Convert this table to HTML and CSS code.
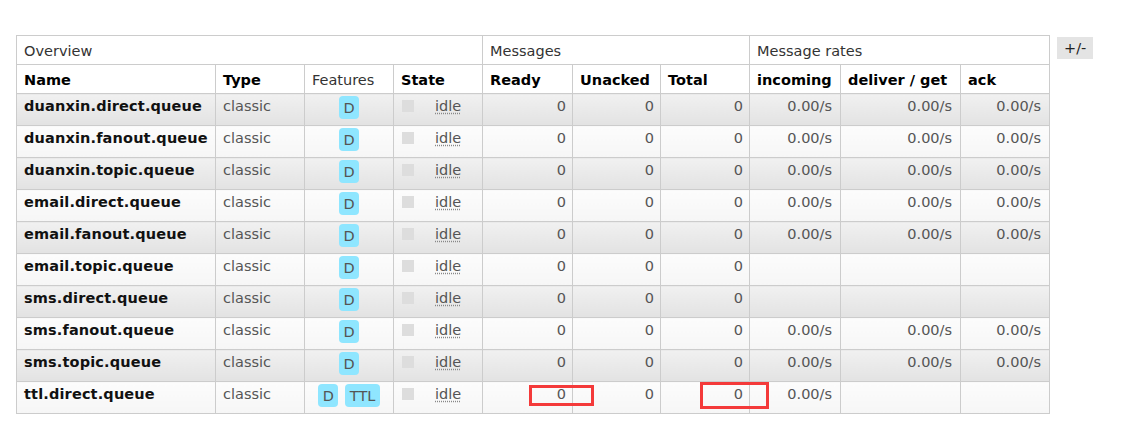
FILE: index.html
```html
<!DOCTYPE html>
<html>
<head>
<meta charset="utf-8">
<link rel="stylesheet" href="styles.css">
</head>
<body>
<div class="page">
  <table class="list">
    <colgroup>
      <col class="c-name"><col class="c-type"><col class="c-feat"><col class="c-state">
      <col class="c-ready"><col class="c-unacked"><col class="c-total">
      <col class="c-in"><col class="c-deliver"><col class="c-ack">
    </colgroup>
    <thead>
      <tr class="group">
        <th colspan="4">Overview</th>
        <th colspan="3">Messages</th>
        <th colspan="3">Message rates</th>
      </tr>
      <tr class="cols">
        <th>Name</th><th>Type</th><th class="plain">Features</th><th>State</th>
        <th>Ready</th><th>Unacked</th><th>Total</th>
        <th>incoming</th><th>deliver / get</th><th>ack</th>
      </tr>
    </thead>
    <tbody>
      <tr class="alt1">
        <td class="name">duanxin.direct.queue</td><td class="muted">classic</td>
        <td class="feat"><span class="badge">D</span></td>
        <td class="muted"><span class="dot"></span><span class="idle">idle</span></td>
        <td class="num">0</td><td class="num">0</td><td class="num">0</td>
        <td class="rate">0.00/s</td><td class="rate">0.00/s</td><td class="rate">0.00/s</td>
      </tr>
      <tr class="alt2">
        <td class="name">duanxin.fanout.queue</td><td class="muted">classic</td>
        <td class="feat"><span class="badge">D</span></td>
        <td class="muted"><span class="dot"></span><span class="idle">idle</span></td>
        <td class="num">0</td><td class="num">0</td><td class="num">0</td>
        <td class="rate">0.00/s</td><td class="rate">0.00/s</td><td class="rate">0.00/s</td>
      </tr>
      <tr class="alt1">
        <td class="name">duanxin.topic.queue</td><td class="muted">classic</td>
        <td class="feat"><span class="badge">D</span></td>
        <td class="muted"><span class="dot"></span><span class="idle">idle</span></td>
        <td class="num">0</td><td class="num">0</td><td class="num">0</td>
        <td class="rate">0.00/s</td><td class="rate">0.00/s</td><td class="rate">0.00/s</td>
      </tr>
      <tr class="alt2">
        <td class="name">email.direct.queue</td><td class="muted">classic</td>
        <td class="feat"><span class="badge">D</span></td>
        <td class="muted"><span class="dot"></span><span class="idle">idle</span></td>
        <td class="num">0</td><td class="num">0</td><td class="num">0</td>
        <td class="rate">0.00/s</td><td class="rate">0.00/s</td><td class="rate">0.00/s</td>
      </tr>
      <tr class="alt1">
        <td class="name">email.fanout.queue</td><td class="muted">classic</td>
        <td class="feat"><span class="badge">D</span></td>
        <td class="muted"><span class="dot"></span><span class="idle">idle</span></td>
        <td class="num">0</td><td class="num">0</td><td class="num">0</td>
        <td class="rate">0.00/s</td><td class="rate">0.00/s</td><td class="rate">0.00/s</td>
      </tr>
      <tr class="alt2">
        <td class="name">email.topic.queue</td><td class="muted">classic</td>
        <td class="feat"><span class="badge">D</span></td>
        <td class="muted"><span class="dot"></span><span class="idle">idle</span></td>
        <td class="num">0</td><td class="num">0</td><td class="num">0</td>
        <td class="rate"></td><td class="rate"></td><td class="rate"></td>
      </tr>
      <tr class="alt1">
        <td class="name">sms.direct.queue</td><td class="muted">classic</td>
        <td class="feat"><span class="badge">D</span></td>
        <td class="muted"><span class="dot"></span><span class="idle">idle</span></td>
        <td class="num">0</td><td class="num">0</td><td class="num">0</td>
        <td class="rate"></td><td class="rate"></td><td class="rate"></td>
      </tr>
      <tr class="alt2">
        <td class="name">sms.fanout.queue</td><td class="muted">classic</td>
        <td class="feat"><span class="badge">D</span></td>
        <td class="muted"><span class="dot"></span><span class="idle">idle</span></td>
        <td class="num">0</td><td class="num">0</td><td class="num">0</td>
        <td class="rate">0.00/s</td><td class="rate">0.00/s</td><td class="rate">0.00/s</td>
      </tr>
      <tr class="alt1">
        <td class="name">sms.topic.queue</td><td class="muted">classic</td>
        <td class="feat"><span class="badge">D</span></td>
        <td class="muted"><span class="dot"></span><span class="idle">idle</span></td>
        <td class="num">0</td><td class="num">0</td><td class="num">0</td>
        <td class="rate">0.00/s</td><td class="rate">0.00/s</td><td class="rate">0.00/s</td>
      </tr>
      <tr class="alt2">
        <td class="name">ttl.direct.queue</td><td class="muted">classic</td>
        <td class="feat"><span class="badge">D</span><span class="badge">TTL</span></td>
        <td class="muted"><span class="dot"></span><span class="idle">idle</span></td>
        <td class="num">0</td><td class="num">0</td><td class="num">0</td>
        <td class="rate">0.00/s</td><td class="rate"></td><td class="rate"></td>
      </tr>
    </tbody>
  </table>
  <span class="toggle">+/-</span>
  <div class="mark mark-ready"></div>
  <div class="mark mark-total"></div>
</div>
</body>
</html>
```

FILE: styles.css
```css
html, body {
  margin: 0;
  padding: 0;
  background: #fff;
}

body {
  font-family: "DejaVu Sans", Verdana, sans-serif;
  font-size: 14.5px;
  color: #333;
}

.page {
  position: relative;
  display: flex;
  align-items: flex-start;
  padding: 35px 0 0 16px;
}

.list {
  border-collapse: collapse;
  table-layout: fixed;
  width: 1034px;
  border: 1px solid #ccc;
}

.c-name { width: 199px; }
.c-type { width: 89px; }
.c-feat { width: 89px; }
.c-state { width: 89px; }
.c-ready { width: 90px; }
.c-unacked { width: 88px; }
.c-total { width: 89px; }
.c-in { width: 91px; }
.c-deliver { width: 120px; }
.c-ack { width: 89px; }

.list th,
.list td {
  border: 1px solid #ccc;
  padding: 0 7px;
  white-space: nowrap;
  overflow: hidden;
}

.list th {
  text-align: left;
  vertical-align: middle;
  line-height: 17px;
  padding-top: 2px;
}

.group th {
  height: 26px;
  font-weight: normal;
  color: #333;
}

.cols th {
  height: 26px;
  font-weight: bold;
  color: #000;
}

.cols th.plain {
  font-weight: normal;
  color: #333;
}

.list td {
  height: 27px;
  vertical-align: top;
  padding-top: 4px;
  line-height: 17px;
  color: #555;
}

.alt1 td {
  background: linear-gradient(#f1f1f1, #e2e2e2);
}

.alt2 td {
  background: linear-gradient(#fcfcfc, #f6f6f6);
}

.list td.name {
  font-weight: bold;
  color: #111;
  letter-spacing: 0.15px;
}

.list td.num {
  text-align: right;
  padding-right: 6px;
}

.list td.rate {
  text-align: right;
  padding-right: 8px;
}

.list td.feat {
  text-align: center;
  padding-left: 0;
  padding-right: 0;
}

.badge {
  display: inline-block;
  vertical-align: top;
  box-sizing: border-box;
  height: 23px;
  margin-top: -2px;
  padding: 2px 4.5px 0;
  line-height: 21px;
  background: #8fe6ff;
  border-radius: 4px;
  color: #555;
}

.badge + .badge {
  margin-left: 7px;
}

.dot {
  display: inline-block;
  vertical-align: top;
  width: 12px;
  height: 12px;
  margin-top: 2px;
  margin-left: 1px;
  margin-right: 21px;
  background: #ddd;
}

.idle {
  text-decoration: underline dotted #888;
  text-underline-offset: 2px;
}

.toggle {
  margin: 2px 0 0 7px;
  padding: 0 7px;
  height: 22px;
  line-height: 22px;
  background: #e4e4e4;
  color: #222;
}

.mark {
  position: absolute;
  border: 3px solid #f43a3a;
  box-sizing: border-box;
}

.mark-ready {
  left: 529px;
  top: 385px;
  width: 65px;
  height: 21px;
}

.mark-total {
  left: 700px;
  top: 382px;
  width: 69px;
  height: 27px;
}
```
